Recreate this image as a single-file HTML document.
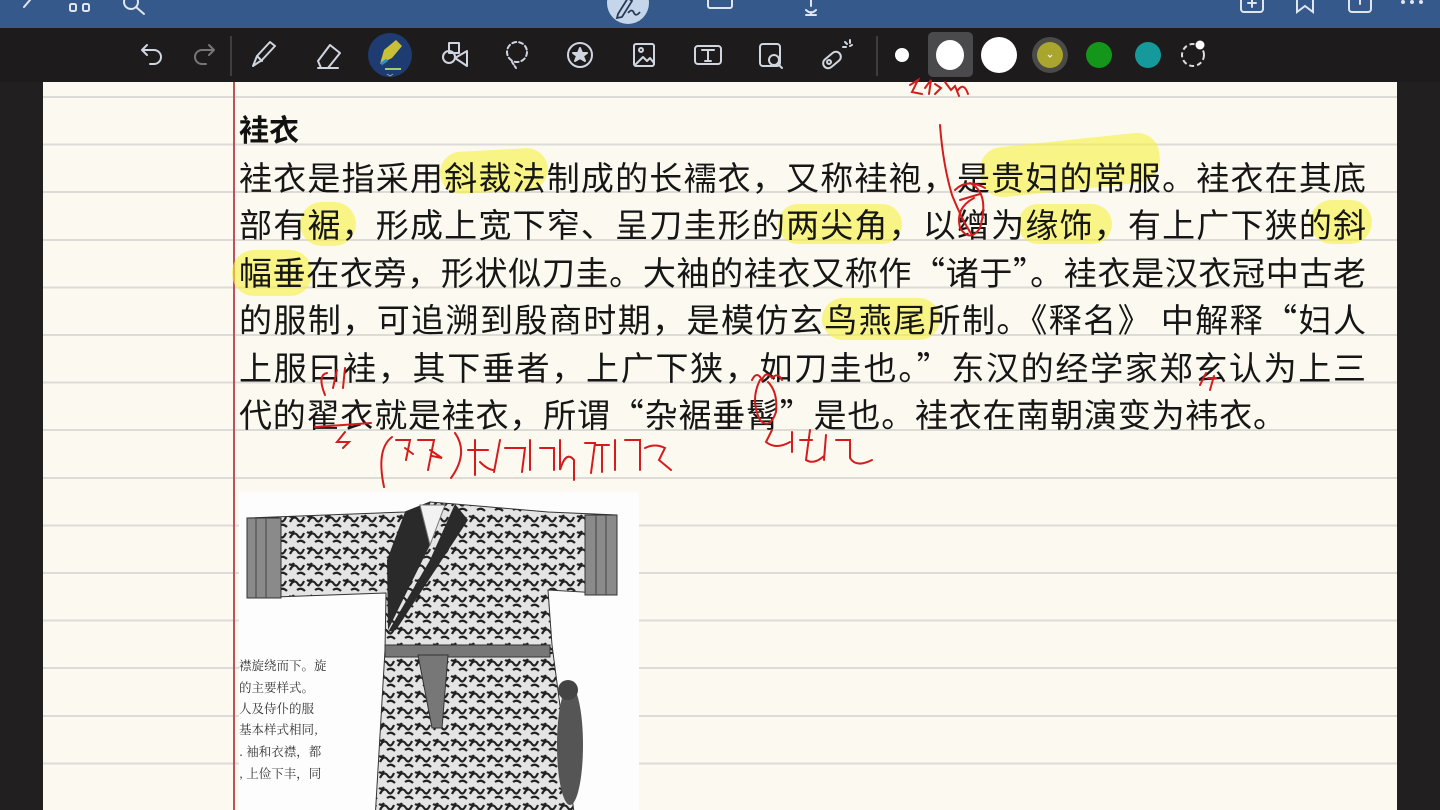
<!DOCTYPE html>
<html><head><meta charset="utf-8"><style>
*{margin:0;padding:0;box-sizing:border-box}
body{width:1440px;height:810px;overflow:hidden;background:#211f20;position:relative;font-family:"Noto Sans CJK SC",sans-serif}
#top{position:absolute;left:0;top:0;width:1440px;height:28px;background:#35598b}
#tb{position:absolute;left:0;top:28px;width:1440px;height:54px;background:#1d1b1c}
#page{position:absolute;left:43px;top:82px;width:1354px;height:728px;background:#fcfaf0;
background-image:repeating-linear-gradient(to bottom,transparent 0,transparent 14px,#dddbd6 14px,#dddbd6 16px,transparent 16px,transparent 47.6px)}
#margin{position:absolute;left:233px;top:82px;width:1.5px;height:728px;background:#c0505a}
.t{position:absolute;left:239px;width:1127px;font-size:33px;line-height:47.6px;color:#161616;white-space:nowrap;text-align:justify;text-align-last:justify;font-family:"Noto Sans CJK SC",sans-serif}
.hl{position:absolute;background:rgba(246,240,70,.62);border-radius:22px}
svg{position:absolute;left:0;top:0}
</style></head><body>
<div id="top"></div>
<svg width="1440" height="28" style="z-index:2">
<g stroke="#dfe6f0" stroke-width="2" fill="none" stroke-linecap="round">
<path d="M30 0 L24 7"/>
<rect x="70" y="4" width="6" height="7" rx="1.5"/><rect x="83" y="4" width="6" height="7" rx="1.5"/>
<circle cx="131" cy="2" r="7"/><path d="M136 7 L144 14"/>
<rect x="708" y="-6" width="24" height="14" rx="2"/>
<path d="M811 -4 v10 M806 10 q5 5 10 0 M811 12 v3 M806 15 h10"/>
<rect x="1241" y="-6" width="22" height="18" rx="3"/><path d="M1252 -1 v8 M1248 3 h8"/>
<path d="M1297 -2 v14 l8 -6 l8 6 v-14"/>
<rect x="1349" y="-4" width="22" height="16" rx="3"/><path d="M1360 -4 v8"/>
</g>
<circle cx="628" cy="3" r="21" fill="#c5d5ea"/>
<path d="M618 14 l10 -16 l4 3 l-10 16 l-5 1z M628 13 q4 -5 6 0 q2 4 6 -1" stroke="#2a3a55" stroke-width="1.8" fill="none"/>
<circle cx="1403" cy="2" r="2" fill="#dfe6f0"/><circle cx="1412" cy="2" r="2" fill="#dfe6f0"/><circle cx="1421" cy="2" r="2" fill="#dfe6f0"/>
</svg>
<div id="tb"></div>
<svg width="1440" height="82" style="z-index:2">
<g stroke="#d0d6e0" stroke-width="2" fill="none" stroke-linecap="round" stroke-linejoin="round">
<path d="M142 50 h12 a7 7 0 0 1 0 14 h-4 M147 45 l-5 5 l5 5"/>
<path stroke="#777" d="M214 50 h-12 a7 7 0 0 0 0 14 h4 M209 45 l5 5 l-5 5"/>
<path d="M253 66 l4 -10 l13 -14 l5 4 l-13 14 z M257 56 l5 5"/>
<path d="M318 61 l12 -16 l10 8 l-12 15 h-7 z M330 45 l10 8 M318 68 h20"/>
<path d="M449 43 h10 v10 h-10z"/><circle cx="449" cy="57" r="6"/><path d="M455 58 l12 -7 v15z"/>
<circle cx="517" cy="52" r="10" stroke-dasharray="4 3"/><path d="M512 62 l4 6" stroke-dasharray="3 2"/>
<circle cx="580" cy="55" r="12"/><path d="M580 48 l2 5 h5 l-4 3 l2 5 l-5 -3 l-5 3 l2 -5 l-4 -3 h5z" fill="#d0d6e0"/>
<rect x="634" y="44" width="20" height="22" rx="2"/><path d="M636 64 l7 -7 l4 4 l3 -3 l4 5"/><circle cx="641" cy="50" r="2"/>
<rect x="695" y="46" width="26" height="18" rx="3"/><path d="M702 50 h12 M708 50 v11 M705 61 h6"/>
<rect x="760" y="44" width="20" height="22" rx="3"/><circle cx="774" cy="60" r="5"/><path d="M778 64 l4 4"/>
<rect x="822" y="55" width="20" height="10" rx="5" transform="rotate(-40 832 60)"/><circle cx="829" cy="62" r="2"/>
<path d="M845 42 l2 2 M850 40 v3 M843 47 h3 M852 45 l-2 1"/>
</g>
<path d="M231 36 v40 M877 36 v40" stroke="#4a4a4a" stroke-width="1.5"/>
<circle cx="390" cy="55" r="22" fill="#1e3c72"/>
<path d="M380 64 l4 -14 l12 -10 l6 6 l-10 12 z" fill="#c9c037"/><path d="M381 64 l6 -4" stroke="#2b8fd8" stroke-width="3"/>
<path d="M385 69 h16" stroke="#9fcf6a" stroke-width="2"/><path d="M387 74 l3 2 l3 -2" stroke="#8aa" fill="none"/>
<circle cx="902" cy="55" r="7" fill="#fff"/>
<rect x="928" y="32" width="45" height="45" rx="5" fill="#4a4a4d"/>
<ellipse cx="950" cy="55" rx="14" ry="15" fill="#fff"/>
<ellipse cx="999" cy="55" rx="18" ry="18" fill="#fff"/>
<circle cx="1050" cy="55" r="18" fill="#4a4a48"/><circle cx="1050" cy="55" r="13" fill="#a9a52d"/>
<path d="M1048 55 l2 2 l2 -2" stroke="#eee" fill="none" stroke-width="1.2"/>
<circle cx="1099" cy="55" r="13" fill="#14961b"/>
<circle cx="1148" cy="55" r="13" fill="#16999b"/>
<circle cx="1193" cy="55" r="11" stroke="#ddd" stroke-width="2" fill="none" stroke-dasharray="5 3"/>
<circle cx="1200" cy="45" r="4.5" fill="#fff"/>
</svg>
<div id="page"></div>
<div id="margin"></div>
<div class="hl" style="left:440px;top:150px;width:108px;height:42px;transform:rotate(-3deg)"></div>
<div class="hl" style="left:980px;top:140px;width:180px;height:50px;transform:rotate(-6deg)"></div>
<div class="hl" style="left:300px;top:202px;width:56px;height:44px"></div>
<div class="hl" style="left:778px;top:204px;width:124px;height:40px"></div>
<div class="hl" style="left:1018px;top:204px;width:94px;height:40px"></div>
<div class="hl" style="left:1310px;top:200px;width:62px;height:44px"></div>
<div class="hl" style="left:232px;top:250px;width:80px;height:46px"></div>
<div class="hl" style="left:822px;top:298px;width:118px;height:42px"></div>
<div style="position:absolute;left:239px;top:106px;font-size:30px;line-height:44px;font-weight:bold;color:#111;font-family:'Noto Sans CJK SC',sans-serif">袿衣</div>
<div class="t" style="top:153px">袿衣是指采用斜裁法制成的长襦衣，又称袿袍，是贵妇的常服。袿衣在其底</div>
<div class="t" style="top:200px">部有裾，形成上宽下窄、呈刀圭形的两尖角，以缯为缘饰，有上广下狭的斜</div>
<div class="t" style="top:248px">幅垂在衣旁，形状似刀圭。大袖的袿衣又称作“诸于”。袿衣是汉衣冠中古老</div>
<div class="t" style="top:295px">的服制，可追溯到殷商时期，是模仿玄鸟燕尾所制。《释名》 中解释“妇人</div>
<div class="t" style="top:343px">上服曰袿，其下垂者，上广下狭，如刀圭也。”东汉的经学家郑玄认为上三</div>
<div class="t" style="top:390px;width:auto;text-align-last:auto;letter-spacing:0.8px">代的翟衣就是袿衣，所谓“杂裾垂髾”是也。袿衣在南朝演变为袆衣。</div>
<div style="position:absolute;left:239px;top:492px;width:400px;height:318px;background:#fdfdfd"></div>
<svg width="1440" height="810" style="z-index:3">
<defs><pattern id="pt" width="18" height="16" patternUnits="userSpaceOnUse"><rect width="18" height="16" fill="#e4e4e4"/><path d="M2 10 q4 -8 8 -2 q3 4 6 -3 M1 4 q3 2 5 -1 M9 14 q4 -3 8 1" stroke="#222" stroke-width="2.2" fill="none"/></pattern></defs>
<path d="M247 518 L405 512 L430 502 L455 504 L548 512 L617 515 L617 594 L548 590 L552 645 L575 820 L375 820 L385 650 L386 593 L247 598 Z" fill="url(#pt)" stroke="#333"/>
<rect x="247" y="518" width="34" height="80" fill="#8a8a8a" stroke="#333"/>
<rect x="585" y="515" width="32" height="80" fill="#8a8a8a" stroke="#333"/>
<path d="M256 518v80M266 518v80M596 515v80M606 515v80" stroke="#444"/>
<path d="M405 512 L430 502 L430 545 L388 630 L387 560 Z M455 504 L468 520 L396 630 L388 632 L430 560 Z" fill="#2a2a2a"/>
<path d="M420 505 L430 545 L445 505 Z" fill="#f2f2f2" stroke="#777"/>
<rect x="385" y="645" width="165" height="12" fill="#777" stroke="#333"/>
<path d="M418 655 L432 728 L442 728 L448 655 Z" fill="#777" stroke="#333"/>
<ellipse cx="570" cy="745" rx="13" ry="60" fill="#555"/><circle cx="568" cy="690" r="10" fill="#444"/>
<g font-family="'Noto Serif CJK SC',serif" font-size="12.5" fill="#333">
<text x="239" y="670">襟旋绕而下。旋</text><text x="239" y="692">的主要样式。</text><text x="239" y="713">人及侍仆的服</text><text x="239" y="734">基本样式相同,</text><text x="239" y="756">. 袖和衣襟，都</text><text x="239" y="778">, 上俭下丰，同</text>
</g>
<g stroke="#d41c1c" stroke-width="2" fill="none" stroke-linecap="round">
<path d="M910 85 l8 -5 l-6 12 l10 2 M925 88 l6 -8 l-2 14 M935 84 l6 4 l-6 6 M945 82 l6 8 l4 -4 l4 10 M958 90 q6 -8 10 4"/>
<path d="M940 125 q3 40 12 70 q10 25 20 40"/>
<path d="M955 190 q12 -12 30 -2 M960 200 l20 -6 M970 183 q20 10 10 45 q-10 15 -20 0 q-5 -20 14 -30"/>
<path d="M325 395 q-8 -20 2 -22 M333 388 l4 -18 M343 388 l2 -20 M315 427 l56 -4 M345 432 l-8 10 h12 l-6 6"/>
<path d="M392 437 q-16 12 -8 50 M396 440 l14 0 l-4 20 M405 448 l8 6 M418 440 l16 0 l-6 30 M430 450 l12 8 l-10 -2 M455 433 q14 20 -4 45"/>
<path d="M475 440 l0 35 M468 450 l20 0 M480 462 q8 8 14 8 M500 440 l-6 32 M505 448 l20 0 l-3 24 M530 440 l0 30 M540 448 l14 0 l0 22 M560 440 l0 30 q6 -20 14 -10 l0 20 M585 443 l10 0 l-4 30 M595 445 l14 0 M602 445 l0 27 M615 440 l0 30 M625 440 l15 0 l0 30 M645 448 q10 -5 20 0 l-6 12 l12 10"/>
<path d="M752 380 q5 -10 10 0 q4 -10 10 -2 q6 -6 10 2 M760 380 q-10 20 0 40 q10 10 16 -8 q2 -20 -8 -30"/>
<path d="M772 430 l-6 12 q10 8 24 0 M792 432 l0 20 M800 440 l12 0 M810 430 l-4 30 q8 5 18 -4 M826 435 l-2 25 M836 440 l14 0 l0 18 q6 10 22 2"/>
<path d="M1200 385 l6 -12 M1208 378 l8 0 M1214 376 l-4 14"/>
</g>
</svg>
</body></html>
